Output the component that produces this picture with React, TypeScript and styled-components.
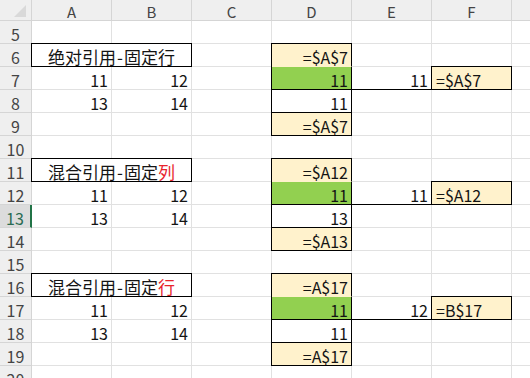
import React from 'react';
import styled, { createGlobalStyle, css } from 'styled-components';

const GlobalStyle = createGlobalStyle`
  html, body {
    margin: 0;
    padding: 0;
    background: #ffffff;
    overflow: hidden;
  }
  body {
    font-family: "Noto Sans CJK SC", "Liberation Sans", sans-serif;
  }
`;

const GRID = '#e1e1e1';
const HEAD_LINE = '#d5d5d5';
const FILLS = {
  green: '#92d050',
  yellow: '#fff2cc',
};

type Fill = keyof typeof FILLS;
type Align = 'left' | 'right' | 'center';

const Sheet = styled.div`
  display: grid;
  grid-template-columns: 32px repeat(7, 80px);
  grid-template-rows: 21px repeat(16, 23px);
  width: 530px;
  height: 378px;
  overflow: hidden;
  color: #141414;
`;

const Corner = styled.div`
  box-sizing: border-box;
  background: #efefef;
  border-right: 1px solid ${HEAD_LINE};
  border-bottom: 1px solid ${HEAD_LINE};
  display: flex;
  justify-content: flex-end;
  align-items: flex-end;
  padding: 0 5px 3px 0;
`;

const ColHeader = styled.div`
  box-sizing: border-box;
  background: #efefef;
  border-right: 1px solid ${HEAD_LINE};
  border-bottom: 1px solid ${HEAD_LINE};
  display: flex;
  justify-content: center;
  align-items: center;
  padding-top: 2px;
  font-size: 15px;
  color: #444;
`;

const RowHeader = styled.div<{ $selected?: boolean }>`
  box-sizing: border-box;
  background: ${(p) => (p.$selected ? '#dcdcdc' : '#efefef')};
  border-right: ${(p) => (p.$selected ? '2px solid #217346' : `1px solid ${HEAD_LINE}`)};
  border-bottom: 1px solid ${HEAD_LINE};
  display: flex;
  justify-content: center;
  align-items: center;
  padding-top: 3px;
  font-size: 16px;
  color: ${(p) => (p.$selected ? '#2a6b52' : '#444')};
`;

const justify = { left: 'flex-start', right: 'flex-end', center: 'center' };

const edgeShadow = (edges: string) => {
  const shadows: string[] = [];
  if (edges.includes('t')) shadows.push('0 -1px 0 0 #000');
  if (edges.includes('l')) shadows.push('-1px 0 0 0 #000');
  if (edges.includes('t') && edges.includes('l')) shadows.push('-1px -1px 0 0 #000');
  return shadows.length ? css`box-shadow: ${shadows.join(', ')};` : '';
};

const Cell = styled.div<{ $fill?: Fill; $align: Align; $span: number; $edges: string; $big?: boolean }>`
  box-sizing: border-box;
  grid-column: span ${(p) => p.$span};
  display: flex;
  align-items: center;
  justify-content: ${(p) => justify[p.$align]};
  padding: 3px 3px 0 ${(p) => (p.$align === 'left' ? '4px' : '3px')};
  background: ${(p) => (p.$fill ? FILLS[p.$fill] : '#fff')};
  border-right: 1px solid
    ${(p) => (p.$edges.includes('r') ? '#000' : p.$fill ? FILLS[p.$fill] : GRID)};
  border-bottom: 1px solid
    ${(p) => (p.$edges.includes('b') ? '#000' : p.$fill ? FILLS[p.$fill] : GRID)};
  font-size: ${(p) => (p.$big ? '17px' : '16px')};
  white-space: nowrap;
  ${(p) => edgeShadow(p.$edges)}
`;

const Red = styled.span`
  color: #e8242c;
`;

const Dash = styled.span`
  display: inline-block;
  margin: 0 1px;
`;

interface CellSpec {
  text?: React.ReactNode;
  align?: Align;
  fill?: Fill;
  span?: number;
  edges?: string;
  big?: boolean;
}

const title = (lead: string, last: React.ReactNode): CellSpec => ({
  text: (
    <>
      {lead}
      <Dash>-</Dash>
      固定
      {last}
    </>
  ),
  align: 'center',
  span: 2,
  edges: 'tlrb',
  big: true,
});

const num = (n: string): CellSpec => ({ text: n, align: 'right' });
const blank: CellSpec = {};

const block = (
  head: CellSpec,
  formulas: [string, string, string, string, string, string],
) => {
  const [top, mid, low, end, side, ref] = formulas;
  return [
    [head, blank, { text: top, align: 'right', fill: 'yellow', edges: 'tlr' }, blank, blank, blank],
    [
      num('11'),
      num('12'),
      blank,
      { text: mid, align: 'right', fill: 'green', edges: 'lrb' },
      { text: side, align: 'right', edges: 'b' },
      { text: ref, align: 'left', fill: 'yellow', edges: 'tlrb' },
      blank,
    ],
    [num('13'), num('14'), blank, { text: low, align: 'right', edges: 'lrb' }, blank, blank, blank],
    [blank, blank, blank, { text: end, align: 'right', fill: 'yellow', edges: 'lrb' }, blank, blank, blank],
  ] as CellSpec[][];
};

const emptyRow = (): CellSpec[] => [blank, blank, blank, blank, blank, blank, blank];

const rows: CellSpec[][] = [
  emptyRow(),
  ...block(title('绝对引用', '行'), ['=$A$7', '11', '11', '=$A$7', '11', '=$A$7']),
  emptyRow(),
  ...block(title('混合引用', <Red>列</Red>), ['=$A12', '11', '13', '=$A13', '11', '=$A12']),
  emptyRow(),
  ...block(title('混合引用', <Red>行</Red>), ['=A$17', '11', '11', '=A$17', '12', '=B$17']),
  emptyRow(),
];

// pad the head rows out to column G
rows.forEach((r) => {
  let width = r.reduce((w, c) => w + (c.span ?? 1), 0);
  while (width < 7) {
    r.push(blank);
    width += 1;
  }
});

// G sits mostly off-screen, so its letter is not visible
const COLUMNS = ['A', 'B', 'C', 'D', 'E', 'F', ''];
const FIRST_ROW = 5;
const SELECTED_ROW = 13;

const CornerMark = () => (
  <svg width="12" height="12" viewBox="0 0 12 12">
    <polygon points="12,0 12,12 0,12" fill="#d9d9d9" />
  </svg>
);

export default function App() {
  return (
    <>
      <GlobalStyle />
      <Sheet>
        <Corner>
          <CornerMark />
        </Corner>
        {COLUMNS.map((c, i) => (
          <ColHeader key={i}>{c}</ColHeader>
        ))}
        {rows.map((row, i) => {
          const n = FIRST_ROW + i;
          return (
            <React.Fragment key={n}>
              <RowHeader $selected={n === SELECTED_ROW}>{n}</RowHeader>
              {row.map((c, j) => (
                <Cell
                  key={j}
                  $fill={c.fill}
                  $align={c.align ?? 'left'}
                  $span={c.span ?? 1}
                  $edges={c.edges ?? ''}
                  $big={c.big}
                >
                  {c.text}
                </Cell>
              ))}
            </React.Fragment>
          );
        })}
      </Sheet>
    </>
  );
}
